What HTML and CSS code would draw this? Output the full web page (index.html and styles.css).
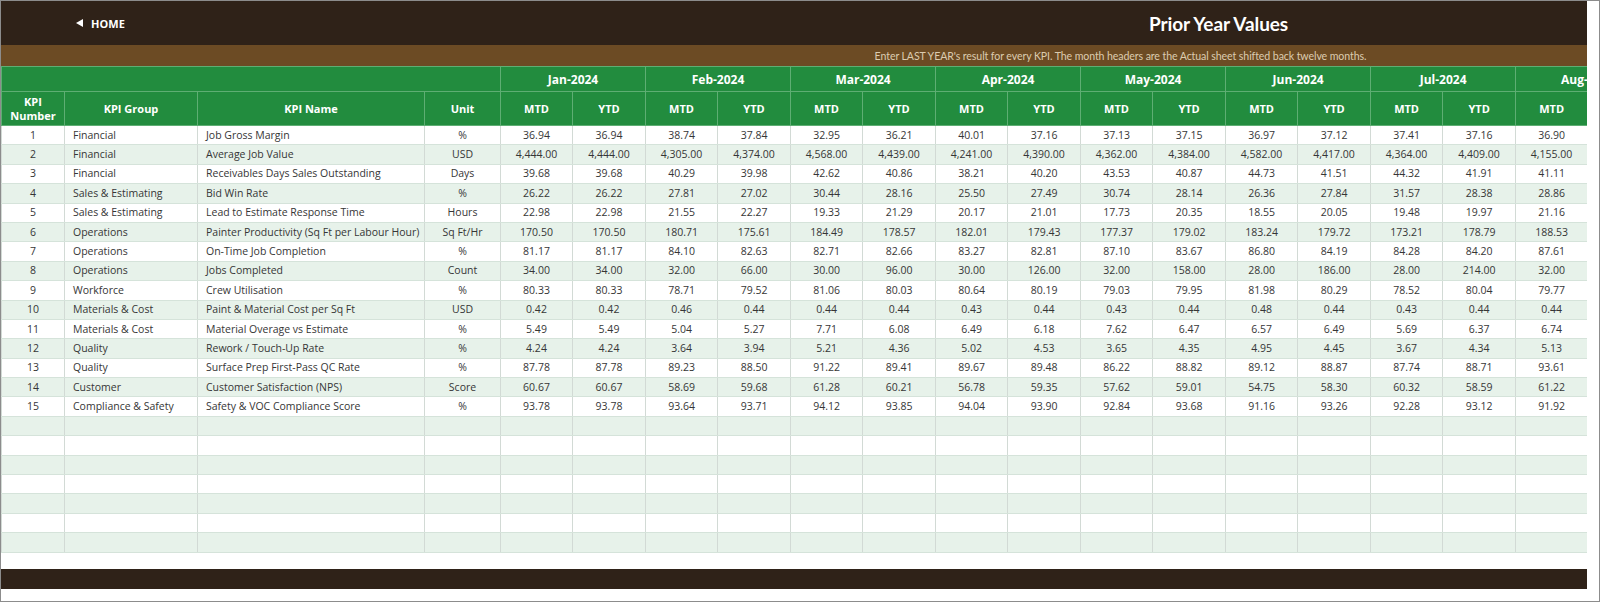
FILE: index.html
```html
<!DOCTYPE html>
<html lang="en">
<head>
<meta charset="utf-8">
<title>Prior Year Values</title>
<link rel="stylesheet" href="styles.css">
</head>
<body>
<div class="frame">
  <div class="sheet">
    <header class="topbar">
      <div class="home"><span class="tri"></span><span class="home-label">HOME</span></div>
      <h1 class="title">Prior Year Values</h1>
    </header>
    <div class="band"><p class="note">Enter LAST YEAR's result for every KPI. The month headers are the Actual sheet shifted back twelve months.</p></div>
    <div class="grid-wrap">
      <table class="kpi">
        <colgroup>
          <col class="c-num"><col class="c-grp"><col class="c-name"><col class="c-unit">
          <col class="c-a"><col class="c-b"><col class="c-a"><col class="c-b"><col class="c-a"><col class="c-b"><col class="c-a"><col class="c-b">
          <col class="c-a"><col class="c-b"><col class="c-a"><col class="c-b"><col class="c-a"><col class="c-b"><col class="c-a"><col class="c-b">
        </colgroup>
        <thead>
          <tr class="h1">
            <th colspan="4"></th>
            <th colspan="2">Jan-2024</th><th colspan="2">Feb-2024</th><th colspan="2">Mar-2024</th><th colspan="2">Apr-2024</th>
            <th colspan="2">May-2024</th><th colspan="2">Jun-2024</th><th colspan="2">Jul-2024</th><th colspan="2">Aug-2024</th>
          </tr>
          <tr class="h2">
            <th>KPI<br>Number</th><th>KPI Group</th><th>KPI Name</th><th>Unit</th>
            <th>MTD</th><th>YTD</th><th>MTD</th><th>YTD</th><th>MTD</th><th>YTD</th><th>MTD</th><th>YTD</th>
            <th>MTD</th><th>YTD</th><th>MTD</th><th>YTD</th><th>MTD</th><th>YTD</th><th>MTD</th><th></th>
          </tr>
        </thead>
        <tbody>
          <tr><td>1</td><td class="l">Financial</td><td class="l">Job Gross Margin</td><td>%</td><td>36.94</td><td>36.94</td><td>38.74</td><td>37.84</td><td>32.95</td><td>36.21</td><td>40.01</td><td>37.16</td><td>37.13</td><td>37.15</td><td>36.97</td><td>37.12</td><td>37.41</td><td>37.16</td><td>36.90</td><td></td></tr>
          <tr><td>2</td><td class="l">Financial</td><td class="l">Average Job Value</td><td>USD</td><td>4,444.00</td><td>4,444.00</td><td>4,305.00</td><td>4,374.00</td><td>4,568.00</td><td>4,439.00</td><td>4,241.00</td><td>4,390.00</td><td>4,362.00</td><td>4,384.00</td><td>4,582.00</td><td>4,417.00</td><td>4,364.00</td><td>4,409.00</td><td>4,155.00</td><td></td></tr>
          <tr><td>3</td><td class="l">Financial</td><td class="l">Receivables Days Sales Outstanding</td><td>Days</td><td>39.68</td><td>39.68</td><td>40.29</td><td>39.98</td><td>42.62</td><td>40.86</td><td>38.21</td><td>40.20</td><td>43.53</td><td>40.87</td><td>44.73</td><td>41.51</td><td>44.32</td><td>41.91</td><td>41.11</td><td></td></tr>
          <tr><td>4</td><td class="l">Sales &amp; Estimating</td><td class="l">Bid Win Rate</td><td>%</td><td>26.22</td><td>26.22</td><td>27.81</td><td>27.02</td><td>30.44</td><td>28.16</td><td>25.50</td><td>27.49</td><td>30.74</td><td>28.14</td><td>26.36</td><td>27.84</td><td>31.57</td><td>28.38</td><td>28.86</td><td></td></tr>
          <tr><td>5</td><td class="l">Sales &amp; Estimating</td><td class="l">Lead to Estimate Response Time</td><td>Hours</td><td>22.98</td><td>22.98</td><td>21.55</td><td>22.27</td><td>19.33</td><td>21.29</td><td>20.17</td><td>21.01</td><td>17.73</td><td>20.35</td><td>18.55</td><td>20.05</td><td>19.48</td><td>19.97</td><td>21.16</td><td></td></tr>
          <tr><td>6</td><td class="l">Operations</td><td class="l">Painter Productivity (Sq Ft per Labour Hour)</td><td>Sq Ft/Hr</td><td>170.50</td><td>170.50</td><td>180.71</td><td>175.61</td><td>184.49</td><td>178.57</td><td>182.01</td><td>179.43</td><td>177.37</td><td>179.02</td><td>183.24</td><td>179.72</td><td>173.21</td><td>178.79</td><td>188.53</td><td></td></tr>
          <tr><td>7</td><td class="l">Operations</td><td class="l">On-Time Job Completion</td><td>%</td><td>81.17</td><td>81.17</td><td>84.10</td><td>82.63</td><td>82.71</td><td>82.66</td><td>83.27</td><td>82.81</td><td>87.10</td><td>83.67</td><td>86.80</td><td>84.19</td><td>84.28</td><td>84.20</td><td>87.61</td><td></td></tr>
          <tr><td>8</td><td class="l">Operations</td><td class="l">Jobs Completed</td><td>Count</td><td>34.00</td><td>34.00</td><td>32.00</td><td>66.00</td><td>30.00</td><td>96.00</td><td>30.00</td><td>126.00</td><td>32.00</td><td>158.00</td><td>28.00</td><td>186.00</td><td>28.00</td><td>214.00</td><td>32.00</td><td></td></tr>
          <tr><td>9</td><td class="l">Workforce</td><td class="l">Crew Utilisation</td><td>%</td><td>80.33</td><td>80.33</td><td>78.71</td><td>79.52</td><td>81.06</td><td>80.03</td><td>80.64</td><td>80.19</td><td>79.03</td><td>79.95</td><td>81.98</td><td>80.29</td><td>78.52</td><td>80.04</td><td>79.77</td><td></td></tr>
          <tr><td>10</td><td class="l">Materials &amp; Cost</td><td class="l">Paint &amp; Material Cost per Sq Ft</td><td>USD</td><td>0.42</td><td>0.42</td><td>0.46</td><td>0.44</td><td>0.44</td><td>0.44</td><td>0.43</td><td>0.44</td><td>0.43</td><td>0.44</td><td>0.48</td><td>0.44</td><td>0.43</td><td>0.44</td><td>0.44</td><td></td></tr>
          <tr><td>11</td><td class="l">Materials &amp; Cost</td><td class="l">Material Overage vs Estimate</td><td>%</td><td>5.49</td><td>5.49</td><td>5.04</td><td>5.27</td><td>7.71</td><td>6.08</td><td>6.49</td><td>6.18</td><td>7.62</td><td>6.47</td><td>6.57</td><td>6.49</td><td>5.69</td><td>6.37</td><td>6.74</td><td></td></tr>
          <tr><td>12</td><td class="l">Quality</td><td class="l">Rework / Touch-Up Rate</td><td>%</td><td>4.24</td><td>4.24</td><td>3.64</td><td>3.94</td><td>5.21</td><td>4.36</td><td>5.02</td><td>4.53</td><td>3.65</td><td>4.35</td><td>4.95</td><td>4.45</td><td>3.67</td><td>4.34</td><td>5.13</td><td></td></tr>
          <tr><td>13</td><td class="l">Quality</td><td class="l">Surface Prep First-Pass QC Rate</td><td>%</td><td>87.78</td><td>87.78</td><td>89.23</td><td>88.50</td><td>91.22</td><td>89.41</td><td>89.67</td><td>89.48</td><td>86.22</td><td>88.82</td><td>89.12</td><td>88.87</td><td>87.74</td><td>88.71</td><td>93.61</td><td></td></tr>
          <tr><td>14</td><td class="l">Customer</td><td class="l">Customer Satisfaction (NPS)</td><td>Score</td><td>60.67</td><td>60.67</td><td>58.69</td><td>59.68</td><td>61.28</td><td>60.21</td><td>56.78</td><td>59.35</td><td>57.62</td><td>59.01</td><td>54.75</td><td>58.30</td><td>60.32</td><td>58.59</td><td>61.22</td><td></td></tr>
          <tr><td>15</td><td class="l">Compliance &amp; Safety</td><td class="l">Safety &amp; VOC Compliance Score</td><td>%</td><td>93.78</td><td>93.78</td><td>93.64</td><td>93.71</td><td>94.12</td><td>93.85</td><td>94.04</td><td>93.90</td><td>92.84</td><td>93.68</td><td>91.16</td><td>93.26</td><td>92.28</td><td>93.12</td><td>91.92</td><td></td></tr>
          <tr class="empty"><td></td><td></td><td></td><td></td><td></td><td></td><td></td><td></td><td></td><td></td><td></td><td></td><td></td><td></td><td></td><td></td><td></td><td></td><td></td><td></td></tr>
          <tr class="empty"><td></td><td></td><td></td><td></td><td></td><td></td><td></td><td></td><td></td><td></td><td></td><td></td><td></td><td></td><td></td><td></td><td></td><td></td><td></td><td></td></tr>
          <tr class="empty"><td></td><td></td><td></td><td></td><td></td><td></td><td></td><td></td><td></td><td></td><td></td><td></td><td></td><td></td><td></td><td></td><td></td><td></td><td></td><td></td></tr>
          <tr class="empty"><td></td><td></td><td></td><td></td><td></td><td></td><td></td><td></td><td></td><td></td><td></td><td></td><td></td><td></td><td></td><td></td><td></td><td></td><td></td><td></td></tr>
          <tr class="empty"><td></td><td></td><td></td><td></td><td></td><td></td><td></td><td></td><td></td><td></td><td></td><td></td><td></td><td></td><td></td><td></td><td></td><td></td><td></td><td></td></tr>
          <tr class="empty"><td></td><td></td><td></td><td></td><td></td><td></td><td></td><td></td><td></td><td></td><td></td><td></td><td></td><td></td><td></td><td></td><td></td><td></td><td></td><td></td></tr>
          <tr class="empty"><td></td><td></td><td></td><td></td><td></td><td></td><td></td><td></td><td></td><td></td><td></td><td></td><td></td><td></td><td></td><td></td><td></td><td></td><td></td><td></td></tr>
        </tbody>
      </table>
    </div>
    <div class="gap"></div>
    <footer class="bottombar"></footer>
  </div>
</div>
</body>
</html>
```
FILE: styles.css
```css
* { box-sizing: border-box; }
html, body { margin: 0; padding: 0; background: #ffffff; }
body { font-family: "Open Sans", "Noto Sans", "DejaVu Sans", sans-serif; }

.frame {
  width: 1600px;
  height: 602px;
  border: 1px solid #8c8c8c;
  background: #ffffff;
  overflow: hidden;
}
.sheet {
  width: 1586px;
}

.topbar {
  height: 44px;
  background: #2f2218;
  display: grid;
  grid-template-columns: 849px 1fr;
  align-items: center;
  color: #ffffff;
}
.home {
  display: flex;
  align-items: center;
  padding-left: 75px;
  gap: 8px;
  font-weight: 700;
  font-size: 11px;
  letter-spacing: 0.1px;
}
.tri {
  width: 0;
  height: 0;
  border-top: 4.5px solid transparent;
  border-bottom: 4.5px solid transparent;
  border-right: 7px solid #ffffff;
}
.title {
  margin: 0;
  text-align: center;
  font-family: "Lato", "Open Sans", sans-serif;
  font-weight: 700;
  font-size: 19px;
  letter-spacing: -0.1px;
}

.band {
  height: 21px;
  background: #6c4b24;
  display: flex;
  align-items: center;
}
.note {
  margin: 0;
  width: 100%;
  padding-left: 653px;
  text-align: center;
  font-family: "Lato", "Open Sans", sans-serif;
  font-size: 10.6px;
  color: #dccbb0;
  letter-spacing: -0.1px;
}

.grid-wrap {
  width: 1586px;
  overflow: hidden;
}
.kpi {
  border-collapse: collapse;
  table-layout: fixed;
  width: 1659px;
}
.c-num { width: 63px; }
.c-grp { width: 133px; }
.c-name { width: 227px; }
.c-unit { width: 76px; }
.c-a { width: 72px; }
.c-b { width: 73px; }

.kpi th {
  background: #228c3e;
  color: #ffffff;
  font-weight: 700;
  border: 1px solid #5eae73;
  padding: 0;
  text-align: center;
}
.h1 th {
  height: 25px;
  font-size: 12px;
}
.h2 th {
  height: 34px;
  font-size: 11px;
  line-height: 14px;
}

.kpi td {
  height: 19.4px;
  padding: 0 4px;
  font-size: 10.5px;
  color: #363636;
  text-align: center;
  white-space: nowrap;
  overflow: hidden;
  border-top: 1px solid #d5e3da;
  border-bottom: 1px solid #d5e3da;
  border-left: 1px solid #d2dad5;
  border-right: 1px solid #d2dad5;
  line-height: 17px;
}
.kpi td.l {
  text-align: left;
  padding-left: 8px;
}
.kpi tbody tr:nth-child(even) td { background: #e7f2ea; }
.kpi tbody tr:nth-child(odd) td { background: #ffffff; }

.gap { height: 16px; }
.bottombar {
  height: 20px;
  background: #2f2218;
}
```
